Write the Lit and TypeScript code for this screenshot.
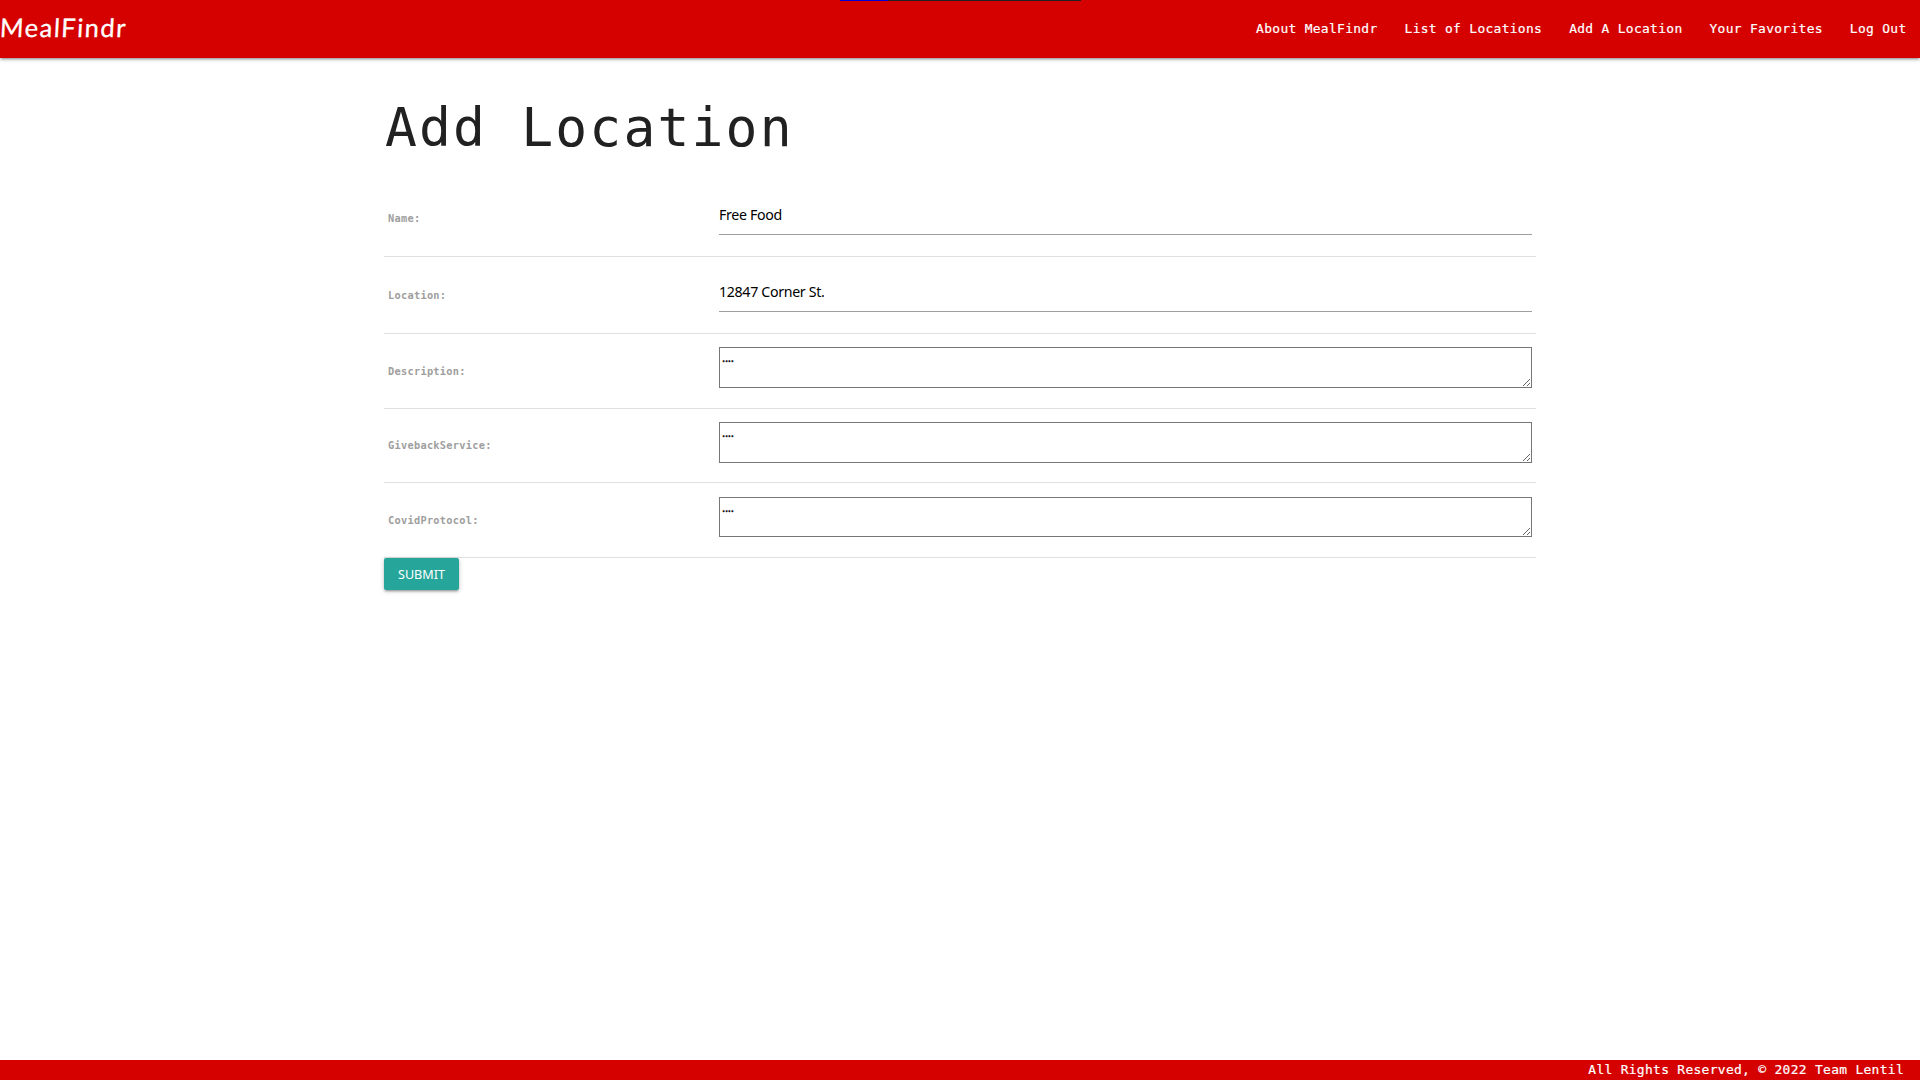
import { LitElement, html, css } from "lit";
import { customElement, property } from "lit/decorators.js";

@customElement("site-nav")
class SiteNav extends LitElement {
  static styles = css`
    :host { display: block; }
    .bar {
      position: relative;
      display: flex; align-items: center; justify-content: space-between;
      height: 58px; background: #d50000; color: #fff;
      box-shadow: 0 2px 2px 0 rgba(0,0,0,.14), 0 3px 1px -2px rgba(0,0,0,.12), 0 1px 5px 0 rgba(0,0,0,.2);
    }
    .logo { font: 400 25.5px/54px Lato, sans-serif; height: 58px; letter-spacing: 1.5px; white-space: nowrap; -webkit-text-stroke: .3px #fff; transform: skewX(-3deg); }
    .links { display: flex; margin: 0; padding: 0; list-style: none; }
    .link {
      padding: 0 13.5px; white-space: nowrap;
      font: 400 12.9px/56px "DejaVu Sans Mono", monospace; letter-spacing: .334px; -webkit-text-stroke: .2px #fff;
    }
    .strip { position: absolute; left: 840px; top: 0; width: 241px; height: 1px; display: flex; background: #212121; }
    .fill { width: 48px; background: #0000d5; }
  `;
  render() {
    const links = ["About MealFindr", "List of Locations", "Add A Location", "Your Favorites", "Log Out"];
    return html`<nav class="bar">
      <span class="logo">MealFindr</span>
      <ul class="links">${links.map((l) => html`<li class="link">${l}</li>`)}</ul>
      <div class="strip"><div class="fill"></div></div>
    </nav>`;
  }
}

@customElement("form-row")
class FormRow extends LitElement {
  @property() label = "";
  @property() value = "";
  @property({ type: Boolean }) multiline = false;
  static styles = css`
    :host { display: grid; grid-template-columns: 335px 813px; box-sizing: border-box; height: 77px; border-bottom: 1px solid #e0e0e0; }
    :host([multiline]) { height: 75px; }
    :host(.short) { height: 74px; }
    .label {
      padding: 0 0 1px 4px; align-self: center; color: #9e9e9e;
      font: 700 10.3px/16px "DejaVu Sans Mono", monospace; letter-spacing: .28px;
    }
    .input, .area { box-sizing: border-box; width: 813px; margin: 0; outline: none; background: transparent; color: #000; border-radius: 0; }
    .input { height: 41px; margin-top: 14px; padding: 1px 0 0 0; border: 0; border-bottom: 1px solid #9e9e9e; font: 14.2px "Noto Sans", sans-serif; letter-spacing: -.33px; }
    .area { height: 41px; margin-top: 13px; padding: 1px 2px; border: 1px solid #767676; font: 12px/17px "Noto Sans", sans-serif; letter-spacing: -.3px; -webkit-text-stroke: .3px #000; overflow: auto; resize: both; }
    :host(.last) .area { height: 40px; margin-top: 14px; }
  `;
  render() {
    return html`<label class="label">${this.label}</label>
      ${this.multiline
        ? html`<textarea class="area" .value=${this.value}></textarea>`
        : html`<input class="input" .value=${this.value} />`}`;
  }
}

@customElement("app-root")
class AppRoot extends LitElement {
  static styles = css`
    :host { display: flex; flex-direction: column; height: 1080px; background: #fff; overflow: hidden; }
    .main { flex: 1; width: 1152px; margin: 0 auto; }
    .title {
      margin: 0; padding: 39px 0 0 1px; height: 83px; color: #212121; white-space: nowrap;
      font: 400 53px/62px "DejaVu Sans Mono", monospace; letter-spacing: 2.15px;
    }
    .submit {
      display: block; width: 75px; height: 32px; border: 0; border-radius: 2px; padding: 1px 0 0;
      background: #26a69a; color: #fff; font: 12.6px/31px "Noto Sans", sans-serif; text-align: center;
      box-shadow: 0 2px 2px 0 rgba(0,0,0,.14), 0 3px 1px -2px rgba(0,0,0,.12), 0 1px 5px 0 rgba(0,0,0,.2);
    }
    .footer {
      height: 20px; background: #d50000; color: #fff; text-align: right; padding-right: 16px;
      font: 400 12.9px/20px "DejaVu Sans Mono", monospace; letter-spacing: .334px; -webkit-text-stroke: .2px #fff;
    }
  `;
  render() {
    return html`<site-nav></site-nav>
      <main class="main">
        <h1 class="title">Add Location</h1>
        <form-row label="Name:" value="Free Food"></form-row>
        <form-row label="Location:" value="12847 Corner St."></form-row>
        <form-row multiline label="Description:" value="...."></form-row>
        <form-row multiline class="short" label="GivebackService:" value="...."></form-row>
        <form-row multiline class="last" label="CovidProtocol:" value="...."></form-row>
        <button class="submit">SUBMIT</button>
      </main>
      <footer class="footer">All Rights Reserved, © 2022 Team Lentil</footer>`;
  }
}
